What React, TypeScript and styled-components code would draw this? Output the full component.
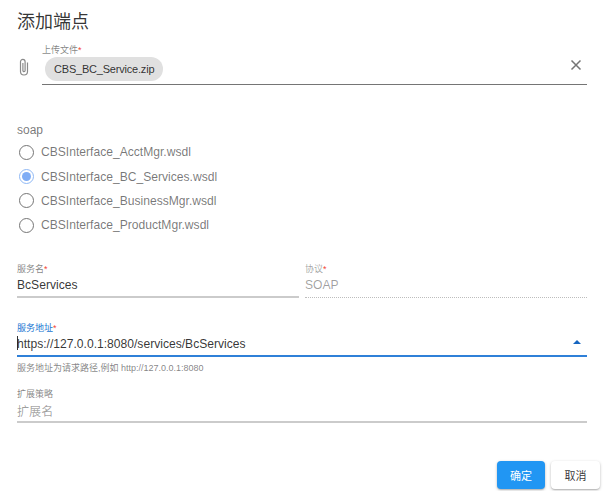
import React from 'react'
import styled, { createGlobalStyle } from 'styled-components'

const GlobalStyle = createGlobalStyle`
  html, body {
    margin: 0;
    background: #fff;
    font-family: 'Liberation Sans', 'Noto Sans CJK SC', sans-serif;
  }
`

const Dialog = styled.div`
  box-sizing: border-box;
  width: 605px;
  height: 491px;
  padding: 11px 18px 0 17px;
  display: flex;
  flex-direction: column;
  position: relative;
  overflow: hidden;
`

const Title = styled.h2`
  margin: 0;
  font-size: 18px;
  font-weight: 400;
  line-height: 22px;
  color: rgba(0, 0, 0, 0.8);
`

const UploadRow = styled.div`
  display: flex;
  align-items: flex-start;
  margin-top: 11px;
  gap: 6px;
`

const ClipBox = styled.div`
  width: 19px;
  padding-top: 14px;
  color: #8a8a8a;
  display: flex;
  justify-content: flex-start;
`

const UploadField = styled.div`
  flex: 1;
  height: 40px;
  border-bottom: 1px solid #757575;
  box-sizing: content-box;
  position: relative;
`

const Label = styled.div<{ $color?: string }>`
  font-size: 9px;
  line-height: 12px;
  color: ${(p) => p.$color || 'rgba(0, 0, 0, 0.5)'};
`

const Star = styled.span`
  color: #f44336;
`

const Chip = styled.div`
  display: inline-flex;
  align-items: center;
  height: 24px;
  margin: 1px 0 0 3px;
  padding: 0 9px;
  border-radius: 12px;
  background: #e0e0e0;
  font-size: 11px;
  letter-spacing: -0.2px;
  color: rgba(0, 0, 0, 0.8);
`

const ClearIcon = styled.div`
  position: absolute;
  right: 4px;
  top: 14px;
  color: #757575;
  display: flex;
`

const GroupTitle = styled.div`
  margin-top: 38px;
  font-size: 12px;
  line-height: 14px;
  color: rgba(0, 0, 0, 0.55);
`

const RadioList = styled.div`
  display: flex;
  flex-direction: column;
  margin-top: 3px;
`

const RadioRow = styled.div`
  display: flex;
  align-items: center;
  height: 24.4px;
  gap: 7px;
  font-size: 12.1px;
  color: rgba(0, 0, 0, 0.54);
`

const RadioMark = styled.span<{ $checked?: boolean }>`
  box-sizing: border-box;
  width: 15px;
  height: 15px;
  margin-left: 2px;
  border-radius: 50%;
  border: 1.5px solid ${(p) => (p.$checked ? '#90b9f5' : '#757575')};
  display: flex;
  align-items: center;
  justify-content: center;

  &::after {
    content: '';
    display: ${(p) => (p.$checked ? 'block' : 'none')};
    width: 9px;
    height: 9px;
    border-radius: 50%;
    background: #7fadf5;
  }
`

const FieldRow = styled.div`
  display: grid;
  grid-template-columns: 282px 282px;
  column-gap: 6px;
  margin-top: 25px;
`

const Field = styled.div<{ $top?: number }>`
  margin-top: ${(p) => p.$top || 0}px;
  position: relative;
`

const Value = styled.div<{ $color?: string }>`
  font-size: 12.1px;
  line-height: 17px;
  height: 17px;
  margin-top: 2px;
  color: ${(p) => p.$color || 'rgba(0, 0, 0, 0.8)'};
`

const Placeholder = styled(Value)`
  line-height: 20px;
  color: rgba(0, 0, 0, 0.38);
`

const Underline = styled.div<{ $kind?: 'plain' | 'dotted' | 'focus' }>`
  margin-top: ${(p) => (p.$kind === 'dotted' ? 3 : 2)}px;
  height: 0;
  border-bottom: ${(p) =>
    p.$kind === 'dotted'
      ? '1px dotted #bdbdbd'
      : p.$kind === 'focus'
        ? '2px solid #2f80d8'
        : '2px solid #cbcbcb'};
`

const Caret = styled.span`
  display: inline-block;
  width: 1px;
  height: 14px;
  margin-right: -1px;
  vertical-align: -2px;
  background: #333;
`

const DropArrow = styled.span`
  position: absolute;
  right: 6px;
  top: 18px;
  width: 0;
  height: 0;
  border-left: 4px solid transparent;
  border-right: 4px solid transparent;
  border-bottom: 4px solid #1565c0;
`

const Help = styled.div`
  margin-top: 4px;
  font-size: 9px;
  line-height: 14px;
  color: rgba(0, 0, 0, 0.5);
`

const Actions = styled.div`
  position: absolute;
  right: 5px;
  bottom: 2px;
  display: flex;
  gap: 6px;
`

const Button = styled.button<{ $primary?: boolean }>`
  width: ${(p) => (p.$primary ? 48 : 49)}px;
  height: 28px;
  padding: 0;
  border: 0;
  border-radius: 4px;
  font-family: inherit;
  font-size: 11px;
  background: ${(p) => (p.$primary ? '#2196f3' : '#fff')};
  color: ${(p) => (p.$primary ? '#fff' : 'rgba(0, 0, 0, 0.8)')};
  box-shadow: 0 1px 3px rgba(0, 0, 0, 0.25), 0 1px 1px rgba(0, 0, 0, 0.12);
`

const files = [
  'CBSInterface_AcctMgr.wsdl',
  'CBSInterface_BC_Services.wsdl',
  'CBSInterface_BusinessMgr.wsdl',
  'CBSInterface_ProductMgr.wsdl',
]

const App: React.FC = () => {
  return (
    <Dialog>
      <GlobalStyle />
      <Title>添加端点</Title>

      <UploadRow>
        <ClipBox>
          <svg width="14" height="19" viewBox="0 0 14 19" fill="none" stroke="currentColor" strokeWidth="1.2">
            <path d="M10.5 4.5v9a3.5 3.5 0 0 1-7 0V3.7a2.3 2.3 0 0 1 4.6 0v8.8a1.1 1.1 0 0 1-2.2 0V5" />
          </svg>
        </ClipBox>
        <UploadField>
          <Label>
            上传文件<Star>*</Star>
          </Label>
          <Chip>CBS_BC_Service.zip</Chip>
          <ClearIcon>
            <svg width="14" height="14" viewBox="0 0 14 14" stroke="currentColor" strokeWidth="1.5">
              <path d="M2.5 2.5l9 9M11.5 2.5l-9 9" />
            </svg>
          </ClearIcon>
        </UploadField>
      </UploadRow>

      <GroupTitle>soap</GroupTitle>
      <RadioList>
        {files.map((name, i) => (
          <RadioRow key={name}>
            <RadioMark $checked={i === 1} />
            {name}
          </RadioRow>
        ))}
      </RadioList>

      <FieldRow>
        <Field>
          <Label>
            服务名<Star>*</Star>
          </Label>
          <Value>BcServices</Value>
          <Underline $kind="plain" />
        </Field>
        <Field>
          <Label $color="rgba(0, 0, 0, 0.38)">
            协议<Star>*</Star>
          </Label>
          <Value $color="rgba(0, 0, 0, 0.38)">SOAP</Value>
          <Underline $kind="dotted" />
        </Field>
      </FieldRow>

      <Field $top={24}>
        <Label $color="#1976d2">
          服务地址<Star>*</Star>
        </Label>
        <Value>
          <Caret />
          https://127.0.0.1:8080/services/BcServices
        </Value>
        <DropArrow />
        <Underline $kind="focus" />
      </Field>
      <Help>服务地址为请求路径,例如 http://127.0.0.1:8080</Help>

      <Field $top={13}>
        <Label>扩展策略</Label>
        <Placeholder>扩展名</Placeholder>
        <Underline $kind="plain" />
      </Field>

      <Actions>
        <Button $primary>确定</Button>
        <Button>取消</Button>
      </Actions>
    </Dialog>
  )
}

export default App
